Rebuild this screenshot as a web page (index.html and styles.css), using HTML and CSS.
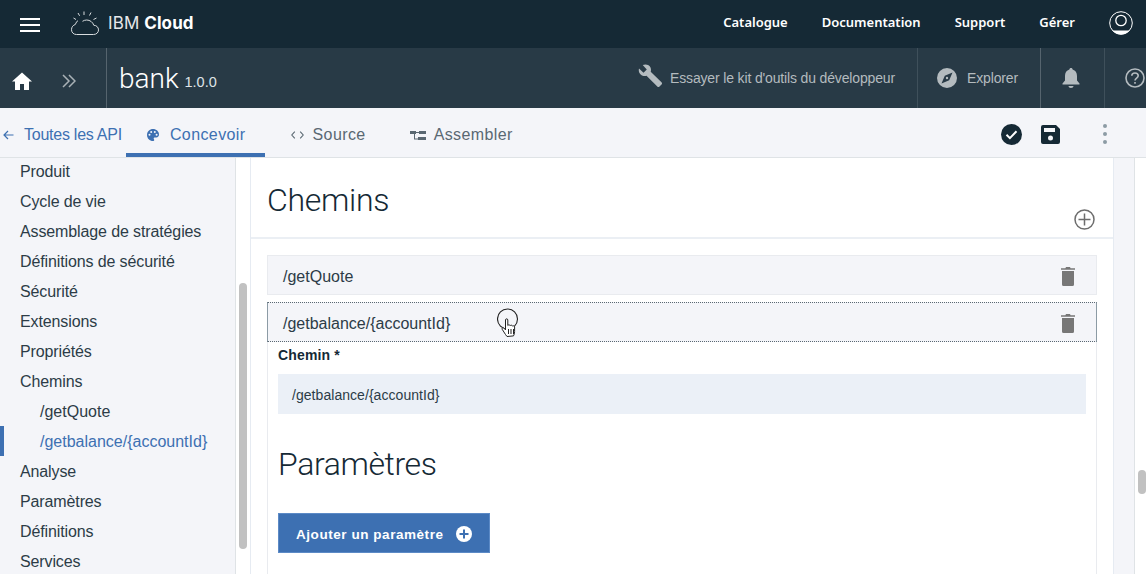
FILE: index.html
```html
<!DOCTYPE html>
<html lang="fr">
<head>
  <title>bank 1.0.0</title>
  <meta charset="utf-8">
  <link rel="stylesheet" href="styles.css">
</head>
<body>

<header class="topbar">
  <svg class="burger" width="20" height="14" viewBox="0 0 20 14"><path d="M0 1h20M0 7h20M0 13h20" stroke="#fff" stroke-width="2"/></svg>
  <svg class="cloud" width="30" height="26" viewBox="0 0 30 26" fill="none" stroke="#d8dcdf" stroke-width="1">
    <path d="M6.5 24.5h17c3 0 5-2 5-4.600 0-2.700-2.100-4.600-4.700-4.600-1-3.200-3.900-5.300-7.100-5.300-1.600 0-3 .5-4.200 1.300"/>
    <path d="M6.500 24.500c-2.800 0-5-1.900-5-4.800 0-2.900 1.700-4.500 3.900-5.300.7-2 1.600-3.100 2.600-3.900"/>
    <path d="M14 1.500v3.500M8 3l1.600 2.800M21 2.500l-1.500 3M3.500 8l2.500 1.500M26.500 8l-3 1.500"/>
  </svg>
  <div class="brand">IBM <b>Cloud</b></div>
  <nav class="topnav">
    <a>Catalogue</a>
    <a>Documentation</a>
    <a>Support</a>
    <a>Gérer</a>
  </nav>
  <svg class="avatar" width="24" height="24" viewBox="0 0 24 24" fill="none" stroke="#fff">
    <circle cx="12" cy="12" r="11.300"/>
    <circle cx="12" cy="9.500" r="5.200" stroke-width="1.300"/>
    <path d="M3.500 19.500h17c-2 2.600-5 4-8.500 4s-6.500-1.400-8.500-4z" fill="#fff" stroke="none"/>
  </svg>
</header>

<div class="appbar">
  <div class="crumbs">
    <svg width="20" height="18" viewBox="0 0 20 18"><path d="M10 .5L0 9.500h3V18h5v-6h4v6h5V9.500h3z" fill="#fff"/></svg>
    <svg width="14" height="14" viewBox="0 0 14 14" fill="none" stroke="#a9b1b6" stroke-width="1.500"><path d="M1 1l6 6-6 6M7 1l6 6-6 6"/></svg>
  </div>
  <div class="apiname">bank <span>1.0.0</span></div>
  <div class="toolkit">
    <svg width="24" height="24" viewBox="0 0 24 24"><path d="M1 4.500L5.500 8.700 8.800 5.400 4.700 1C8 -.3 11.500 1 12.500 3.500c.6 1.500.6 3 .2 4.200L23.500 18.300c.7.700.7 1.500 0 2.200l-2 2c-.7.700-1.500.7-2.200 0L8.500 11.800c-1.300.4-3 .3-4.500-.4C1.500 10.300.2 7.500 1 4.500z" fill="#b4bbbf"/></svg>
    <span>Essayer le kit d'outils du développeur</span>
  </div>
  <div class="explorer">
    <svg width="20" height="20" viewBox="0 0 20 20"><path fill-rule="evenodd" d="M10 0a10 10 0 1 0 0 20 10 10 0 0 0 0-20zM15.500 4.500l-3.300 7.700-7.700 3.300 3.300-7.700zM10 8.800a1.200 1.200 0 1 0 0 2.400 1.200 1.200 0 0 0 0-2.400z" fill="#b4bbbf"/></svg>
    <span>Explorer</span>
  </div>
  <div class="bell">
    <svg width="18" height="20" viewBox="0 0 18 20"><path d="M9 0c1 0 1.600.7 1.600 1.600C13.500 2.400 15 4.800 15 8v4.500l2.500 3v1H.5v-1l2.500-3V8c0-3.200 1.500-5.600 4.400-6.400C7.400.7 8 0 9 0zM6.500 18h5c0 1.200-1.100 2-2.500 2s-2.500-.8-2.500-2z" fill="#b4bbbf"/></svg>
  </div>
  <div class="help">
    <svg width="20" height="20" viewBox="0 0 20 20" fill="none" stroke="#b4bbbf" stroke-width="1.600"><circle cx="10" cy="10" r="9"/><path d="M6.800 7.800C6.800 6 8.200 5 10 5s3.200 1 3.200 2.700c0 2.400-3.200 2.300-3.200 4.800"/><path d="M10 14v1.800"/></svg>
  </div>
</div>

<div class="tabbar">
  <a class="back">
    <svg width="11" height="10" viewBox="0 0 11 10" fill="none" stroke="#3d70b2" stroke-width="1.200"><path d="M10.500 5H1M5 1L1 5l4 4"/></svg>
    Toutes les API
  </a>
  <a class="tab active">
    <svg width="12" height="12" viewBox="0 0 12 12"><path fill-rule="evenodd" d="M6 0C2.700 0 0 2.600 0 5.900 0 9.200 2.700 12 6 12c.8 0 1.200-.5 1.200-1.100 0-.7-.5-.9-.5-1.500 0-.6.500-1 1.100-1h1.400C11 8.400 12 7.300 12 5.500 12 2.400 9.300 0 6 0zM2.500 6.800a1 1 0 1 1 0-2 1 1 0 0 1 0 2zM4.200 4a1 1 0 1 1 0-2 1 1 0 0 1 0 2zM7.800 4a1 1 0 1 1 0-2 1 1 0 0 1 0 2zM9.600 6.800a1 1 0 1 1 0-2 1 1 0 0 1 0 2z" fill="#3d70b2"/></svg>
    Concevoir
  </a>
  <a class="tab tab-source">
    <svg width="13" height="8" viewBox="0 0 13 8" fill="none" stroke="#5a6872" stroke-width="1.100"><path d="M3.800.7L.8 4l3 3.300M9.200.7l3 3.300-3 3.300"/></svg>
    Source
  </a>
  <a class="tab tab-assemble">
    <svg width="16" height="9" viewBox="0 0 16 9" fill="#5a6872"><rect x="0" y="0" width="6" height="3"/><rect x="9" y="0" width="7" height="3"/><rect x="8" y="6" width="8" height="3"/><path d="M6 1h3v1H6zM4 3h1v4.500h3v1H4z"/></svg>
    Assembler
  </a>
  <div class="actions">
    <svg width="21" height="21" viewBox="0 0 21 21"><circle cx="10.500" cy="10.500" r="10.500" fill="#152935"/><path d="M5.500 10.800l3.400 3.300 6.600-6.800" fill="none" stroke="#fff" stroke-width="2"/></svg>
    <svg class="save" width="19" height="19" viewBox="0 0 19 19"><path fill-rule="evenodd" d="M2 0h13l4 4v13a2 2 0 0 1-2 2H2a2 2 0 0 1-2-2V2a2 2 0 0 1 2-2zM3 3v4h11V3zM9.500 10.500a2.500 2.500 0 1 0 0 5 2.500 2.500 0 0 0 0-5z" fill="#152935"/></svg>
    <svg class="more" width="4" height="20" viewBox="0 0 4 20" fill="#8c9ba5"><circle cx="2" cy="2" r="2"/><circle cx="2" cy="10" r="2"/><circle cx="2" cy="18" r="2"/></svg>
  </div>
</div>

<div class="main">
  <aside class="sidebar">
    <ul class="sidelist">
      <li>Produit</li>
      <li>Cycle de vie</li>
      <li>Assemblage de stratégies</li>
      <li>Définitions de sécurité</li>
      <li>Sécurité</li>
      <li>Extensions</li>
      <li>Propriétés</li>
      <li>Chemins</li>
      <li class="sub">/getQuote</li>
      <li class="sub current">/getbalance/{accountId}</li>
      <li>Analyse</li>
      <li>Paramètres</li>
      <li>Définitions</li>
      <li>Services</li>
    </ul>
  </aside>
  <div class="side-thumb"></div>

  <section class="canvas">
    <div class="card">
      <div class="card-head">
        <h1>Chemins</h1>
        <svg width="21" height="21" viewBox="0 0 21 21" fill="none" stroke="#6d6d6d" stroke-width="1.500"><circle cx="10.500" cy="10.500" r="9.500"/><path d="M10.500 4.500v12M4.500 10.500h12"/></svg>
      </div>
      <div class="paths">
        <div class="path-row">
          <span>/getQuote</span>
          <svg class="trash" width="14" height="19" viewBox="0 0 14 19"><path d="M5 0h4l.6 1.300H14v1.400H0V1.300h4.400zM1 4h12v13.500a1.500 1.500 0 0 1-1.500 1.500h-9A1.500 1.500 0 0 1 1 17.500z" fill="#777"/></svg>
        </div>
        <div class="path-row open">
          <span>/getbalance/{accountId}</span>
          <svg class="trash" width="14" height="19" viewBox="0 0 14 19"><path d="M5 0h4l.6 1.300H14v1.400H0V1.300h4.400zM1 4h12v13.500a1.500 1.500 0 0 1-1.500 1.500h-9A1.500 1.500 0 0 1 1 17.500z" fill="#777"/></svg>
        </div>
        <div class="path-body">
          <label class="field-label">Chemin *</label>
          <div class="field">/getbalance/{accountId}</div>
          <h2>Paramètres</h2>
          <button class="add-btn">
            Ajouter un paramètre
            <svg width="16" height="16" viewBox="0 0 16 16"><circle cx="8" cy="8" r="8" fill="#fff"/><path d="M8 3.500v9M3.500 8h9" stroke="#3d70b2" stroke-width="2"/></svg>
          </button>
        </div>
      </div>
    </div>
  </section>

  <div class="rail"></div>
  <div class="page-scroll"><div class="page-thumb"></div></div>

  <svg class="pointer" width="26" height="32" viewBox="0 0 26 32">
    <circle cx="10.500" cy="11" r="10" fill="none" stroke="#222" stroke-width="1.100"/>
    <path d="M10 28.500l-1.500-2-3.300-5.200c-.6-1.200 1-2 1.900-1l1.400 1.600V12c0-1.600 2.300-1.600 2.300 0v5.500c.5-.9 2.100-.9 2.400.2.500-.8 2-.7 2.300.4.600-.6 2.100-.3 2.100.9v4.500c0 1.800-.5 3.100-1.100 4.400z" fill="#fff" stroke="#222" stroke-width="1"/>
    <path d="M11.500 21v5M14 21v5M16.500 21v5" stroke="#222" stroke-width="1"/>
  </svg>
</div>

</body>
</html>
```

FILE: styles.css
```css
html, body {
  margin: 0;
  padding: 0;
  height: 100%;
  overflow: hidden;
}
body {
  display: flex;
  flex-direction: column;
  font-family: "Liberation Sans", Arial, sans-serif;
  color: #152935;
  background: #fff;
}

.topbar {
  flex: 0 0 48px;
  display: flex;
  align-items: center;
  background: #152935;
  color: #fff;
  padding: 0 13px 0 20px;
}
.burger {
  margin-top: 2px;
  margin-right: 30px;
}
.cloud {
  margin-top: -3px;
  margin-right: 8px;
}
.brand {
  font-family: "Inter", "Noto Sans", sans-serif;
  font-size: 17px;
  letter-spacing: .1px;
  color: #e6e8ea;
  padding-bottom: 3px;
}
.brand b {
  color: #fff;
  font-weight: 700;
}
.topnav {
  margin-left: auto;
  display: flex;
  gap: 34px;
  font-family: "Noto Sans", sans-serif;
  font-size: 13px;
  font-weight: 600;
  margin-right: 34px;
  padding-bottom: 4px;
}
.avatar {
  margin-bottom: 3px;
}

.appbar {
  flex: 0 0 60px;
  display: flex;
  align-items: stretch;
  background: #283a46;
  color: #b4bbbf;
  font-size: 14px;
  letter-spacing: -.15px;
}
.crumbs {
  width: 107px;
  display: flex;
  align-items: center;
  gap: 30px;
  padding: 6px 0 0 12px;
  box-sizing: border-box;
  border-right: 1px solid #56646e;
}
.apiname {
  font-family: "Roboto", sans-serif;
  font-weight: 300;
  font-size: 28px;
  letter-spacing: 0;
  color: #fff;
  padding: 2px 0 0 12px;
  line-height: 58px;
}
.apiname span {
  font-family: "Liberation Sans", Arial, sans-serif;
  font-size: 14.500px;
  line-height: 1;
  color: #dfe3e6;
  margin-left: -1px;
  vertical-align: 1px;
}
.toolkit, .explorer, .bell, .help {
  display: flex;
  align-items: center;
}
.toolkit {
  margin-left: auto;
  gap: 8px;
  padding-right: 22px;
  border-right: 1px solid #3f505b;
}
.toolkit svg {
  margin-top: -4px;
}
.explorer {
  gap: 10px;
  width: 123px;
  padding-left: 19px;
  box-sizing: border-box;
  border-right: 1px solid #56646e;
}
.bell {
  width: 64px;
  justify-content: center;
  padding-right: 3px;
  box-sizing: border-box;
  border-right: 1px solid #3f505b;
}
.help {
  width: 41px;
  padding-left: 20px;
  box-sizing: border-box;
}

.tabbar {
  flex: 0 0 50px;
  display: flex;
  align-items: stretch;
  box-sizing: border-box;
  background: #f4f5f9;
  border-bottom: 1px solid #dfe3e6;
  font-size: 16px;
  color: #5a6872;
}
.back, .tab {
  display: flex;
  align-items: center;
  height: 49px;
  box-sizing: border-box;
  padding-top: 5px;
  letter-spacing: .4px;
}
.back {
  color: #3d70b2;
  gap: 10px;
  padding-left: 3px;
  margin-right: 4px;
  letter-spacing: -.25px;
}
.tab {
  gap: 11px;
  padding-left: 21px;
  padding-right: 19px;
}
.tab.active {
  color: #3d70b2;
  border-bottom: 4px solid #3d70b2;
  padding-top: 9px;
}
.tab-source {
  gap: 9px;
  padding-left: 26px;
}
.tab-assemble {
  gap: 8px;
  padding-left: 25px;
}
.actions {
  margin-left: auto;
  display: flex;
  align-items: center;
  padding: 3px 39px 0 0;
}
.save {
  margin-left: 19px;
}
.more {
  margin-left: 43px;
}

.main {
  flex: 1;
  min-height: 0;
  display: flex;
  position: relative;
  overflow: hidden;
}
.sidebar {
  flex: 0 0 236px;
  box-sizing: border-box;
  background: #f4f5f9;
  border-right: 1px solid #dfe3e6;
  overflow: hidden;
}
.sidelist {
  list-style: none;
  margin: -2px 0 0;
  padding: 0;
  font-size: 16px;
  letter-spacing: -.12px;
  color: #2c3c47;
}
.sidelist li {
  height: 30px;
  line-height: 32px;
  padding-left: 20px;
}
.sidelist .sub {
  padding-left: 40px;
  letter-spacing: 0;
}
.sidelist .current {
  color: #3d70b2;
  border-left: 4px solid #3d70b2;
  padding-left: 36px;
}
.side-thumb {
  position: absolute;
  left: 239px;
  top: 125px;
  width: 8px;
  height: 266px;
  border-radius: 4px;
  background: #c1c1c1;
}
.canvas {
  flex: 0 0 878px;
  box-sizing: border-box;
  padding-left: 14px;
  background: #fff;
  overflow: hidden;
}
.card {
  box-sizing: border-box;
  height: 100%;
  border-left: 1px solid #e6ebf2;
  border-right: 1px solid #e6ebf2;
}
.card-head {
  display: flex;
  align-items: flex-end;
  justify-content: space-between;
  box-sizing: border-box;
  height: 81px;
  padding: 0 18px 7px 16px;
  border-bottom: 2px solid #ebeff4;
}
.card-head h1 {
  margin: 0 0 10px;
  font-family: "Roboto", sans-serif;
  font-size: 32px;
  font-weight: 300;
  line-height: 40px;
  letter-spacing: -.3px;
  color: #152935;
}
.paths {
  padding: 16px 16px 0;
}
.path-row {
  height: 40px;
  display: flex;
  align-items: center;
  justify-content: space-between;
  box-sizing: border-box;
  padding: 3px 21px 0 15px;
  background: #f4f5f9;
  border: 1px solid #e9ebef;
  font-size: 16px;
  color: #2c3c47;
}
.trash {
  margin-top: -1px;
}
.path-row.open {
  margin-top: 7px;
  border: 1px dotted #5a6872;
  border-left: 1px solid #8c9ba5;
  border-right: 1px solid #8c9ba5;
}
.path-body {
  box-sizing: border-box;
  height: 300px;
  padding: 5px 10px 0;
  border: 1px solid #e9ebef;
  border-top: 0;
}
.field-label {
  display: block;
  font-size: 14px;
  font-weight: 700;
  line-height: 16px;
  letter-spacing: .15px;
}
.field {
  height: 40px;
  line-height: 42px;
  margin-top: 11px;
  padding-left: 14px;
  background: #ebf0f7;
  font-size: 14px;
  letter-spacing: .05px;
  color: #2c3c47;
}
.path-body h2 {
  margin: 30px 0 29px;
  font-family: "Roboto", sans-serif;
  font-size: 32px;
  font-weight: 300;
  line-height: 40px;
  letter-spacing: -.4px;
  color: #152935;
}
.add-btn {
  display: flex;
  align-items: center;
  gap: 12px;
  height: 40px;
  width: 212px;
  padding: 2px 0 0 17px;
  background: #3d70b2;
  border: 1px solid #5c8ac6;
  color: #fff;
  font-family: "Liberation Sans", Arial, sans-serif;
  font-size: 13.500px;
  font-weight: 700;
  letter-spacing: .55px;
}

.rail {
  flex: 0 0 21px;
  background: #f4f5f9;
  border-right: 1px solid #dfe3e6;
  box-sizing: border-box;
}
.page-scroll {
  flex: 1;
  background: #fff;
  position: relative;
}
.page-thumb {
  position: absolute;
  top: 312px;
  right: 0;
  width: 8px;
  height: 24px;
  border-radius: 4px;
  background: #c1c1c1;
}
.pointer {
  position: absolute;
  left: 497px;
  top: 150px;
}
```
